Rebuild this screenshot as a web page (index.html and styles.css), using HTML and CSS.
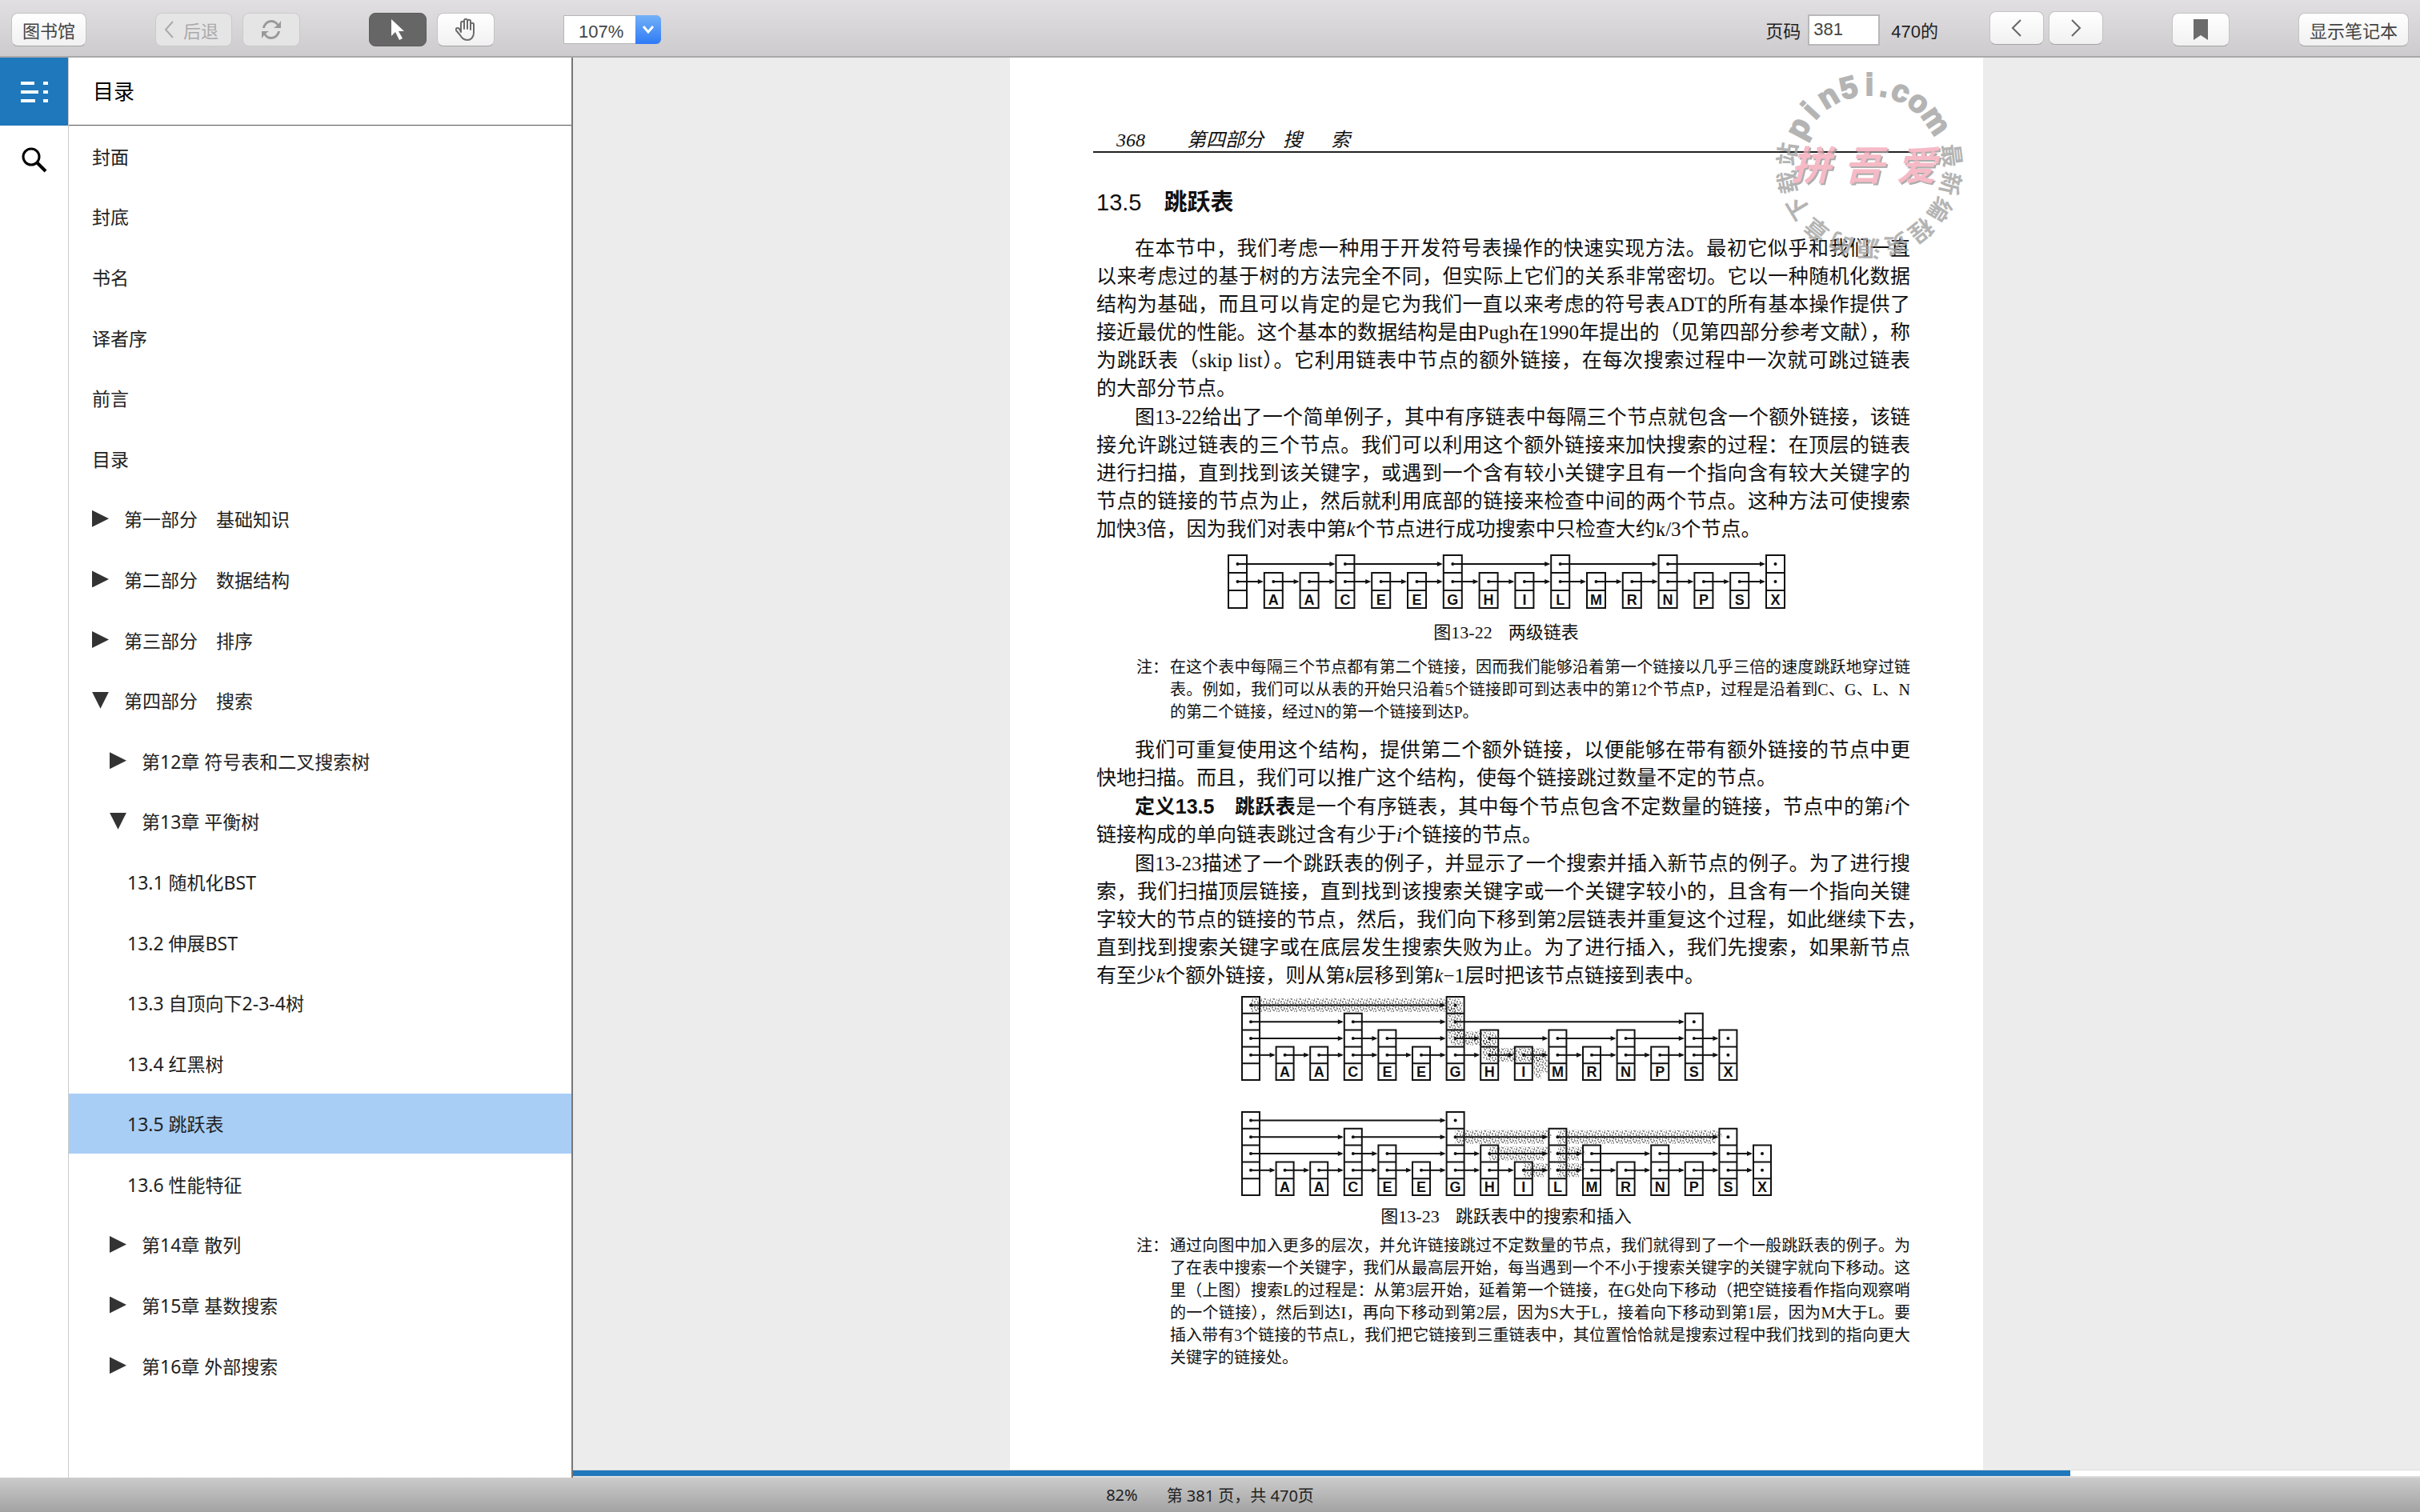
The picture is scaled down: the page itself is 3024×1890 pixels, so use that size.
FILE: index.html
```html
<!DOCTYPE html>
<html lang="zh-CN">
<head>
    <meta charset="UTF-8">
    <meta name="viewport" content="width=device-width, initial-scale=1.0">
    <title>13.5 跳跃表</title>
    <link rel="stylesheet" href="styles.css">
</head>
<body>

    <header class="toolbar">
        <button class="btn" type="button">图书馆</button>
        <div class="group">
            <button class="btn btnBack" type="button" disabled>
                <svg width="12" height="22" viewBox="0 0 12 22" fill="none" stroke="currentColor" stroke-width="2"><path d="M11 1L2 11l9 10"/></svg>
                后退
            </button>
            <button class="btn btnIcon" type="button" disabled aria-label="刷新">
                <svg width="28" height="28" viewBox="0 0 28 28"><path d="M3 12C4 6 9 2 14 2c4 0 7 2 9 5l3-4v9h-9l4-3C19 6 17 5 14 5c-4 0-7 3-8 7zM25 16c-1 6-6 10-11 10-4 0-7-2-9-5l-3 4v-9h9l-4 3c2 3 4 4 7 4 4 0 7-3 8-7z" fill="currentColor"/></svg>
            </button>
        </div>
        <div class="group">
            <button class="btn btnIcon btnOn" type="button" aria-label="选择">
                <svg width="18" height="28" viewBox="0 0 18 28"><path d="M1 1v21l5-5 5 10 4-2-5-9h7z" fill="currentColor"/></svg>
            </button>
            <button class="btn btnIcon" type="button" aria-label="拖动">
                <svg width="26" height="28" viewBox="0 0 26 28" fill="none" stroke="currentColor" stroke-width="2" stroke-linejoin="round" stroke-linecap="round"><path d="M7 17V6c0-3 4-3 4 0v7V3c0-3 4-3 4 0v10V4c0-3 4-3 4 0v10V8c0-3 4-3 4 0v10c0 6-4 9-8 9-5 0-7-3-9-6l-5-6c-1-3 2-4 4-2z"/></svg>
            </button>
        </div>
        <div class="zoomBox">
            <select class="zoom" aria-label="缩放">
                <option>107%</option>
            </select>
            <span class="zoomArrow">
                <svg width="16" height="12" viewBox="0 0 16 12" fill="none" stroke="#fff" stroke-width="3"><path d="M2 2l6 7 6-7"/></svg>
            </span>
        </div>
        <div class="pager">
            <label for="pageNo">页码</label>
            <input class="pageNo" id="pageNo" type="text" value="381">
            <span class="total">470的</span>
        </div>
        <div class="group turn">
            <button class="btn btnTurn" type="button" aria-label="上一页">
                <svg width="14" height="22" viewBox="0 0 14 22" fill="none" stroke="currentColor" stroke-width="2"><path d="M12 1L2 11l10 10"/></svg>
            </button>
            <button class="btn btnTurn" type="button" aria-label="下一页">
                <svg width="14" height="22" viewBox="0 0 14 22" fill="none" stroke="currentColor" stroke-width="2"><path d="M2 1l10 10L2 21"/></svg>
            </button>
        </div>
        <button class="btn btnIcon" type="button" aria-label="书签">
            <svg width="18" height="26" viewBox="0 0 18 26"><path d="M0 0h18v26l-9-6-9 6z" fill="currentColor"/></svg>
        </button>
        <button class="btn" type="button">显示笔记本</button>
    </header>

    <div class="main">
        <div class="rail">
            <button class="railBtn active" type="button" aria-label="目录">
                <svg width="34" height="26" viewBox="0 0 34 26" fill="#fff"><path d="M0 0h17v4H0zM28 0h6v4h-6zM0 11h22v4H0zM28 11h6v4h-6zM0 22h18v4H0zM28 22h6v4h-6z"/></svg>
            </button>
            <button class="railBtn" type="button" aria-label="搜索">
                <svg width="32" height="32" viewBox="0 0 32 32" fill="none" stroke="#000" stroke-width="3"><circle cx="12" cy="12" r="10"/><path d="M19 19l11 11" stroke-width="4"/></svg>
            </button>
        </div>

        <nav class="toc">
            <h2 class="tocTitle">目录</h2>
            <ul class="tocList">
                <li><a href="#">封面</a></li>
                <li><a href="#">封底</a></li>
                <li><a href="#">书名</a></li>
                <li><a href="#">译者序</a></li>
                <li><a href="#">前言</a></li>
                <li><a href="#">目录</a></li>
                <li><a href="#"><i class="arrow"></i>第一部分　基础知识</a></li>
                <li><a href="#"><i class="arrow"></i>第二部分　数据结构</a></li>
                <li><a href="#"><i class="arrow"></i>第三部分　排序</a></li>
                <li><a href="#"><i class="arrow open"></i>第四部分　搜索</a></li>
                <li><a href="#" class="lv2"><i class="arrow"></i>第12章 符号表和二叉搜索树</a></li>
                <li><a href="#" class="lv2"><i class="arrow open"></i>第13章 平衡树</a></li>
                <li><a href="#" class="lv3">13.1 随机化BST</a></li>
                <li><a href="#" class="lv3">13.2 伸展BST</a></li>
                <li><a href="#" class="lv3">13.3 自顶向下2-3-4树</a></li>
                <li><a href="#" class="lv3">13.4 红黑树</a></li>
                <li><a href="#" class="lv3 current">13.5 跳跃表</a></li>
                <li><a href="#" class="lv3">13.6 性能特征</a></li>
                <li><a href="#" class="lv2"><i class="arrow"></i>第14章 散列</a></li>
                <li><a href="#" class="lv2"><i class="arrow"></i>第15章 基数搜索</a></li>
                <li><a href="#" class="lv2"><i class="arrow"></i>第16章 外部搜索</a></li>
            </ul>
        </nav>

        <div class="viewer">
            <div class="scroll">
                <article class="page">
                    <div class="pageHead"><span>368</span><span>第四部分</span><span>搜</span><span>索</span></div>
                    <h1 class="section"><span class="num">13.5</span>跳跃表</h1>

                    <p class="text">
                        <span class="line indent">在本节中，我们考虑一种用于开发符号表操作的快速实现方法。最初它似乎和我们一直</span>
                        <span class="line">以来考虑过的基于树的方法完全不同，但实际上它们的关系非常密切。它以一种随机化数据</span>
                        <span class="line">结构为基础，而且可以肯定的是它为我们一直以来考虑的符号表ADT的所有基本操作提供了</span>
                        <span class="line">接近最优的性能。这个基本的数据结构是由Pugh在1990年提出的（见第四部分参考文献），称</span>
                        <span class="line">为跳跃表（skip list）。它利用链表中节点的额外链接，在每次搜索过程中一次就可跳过链表</span>
                        <span class="line last">的大部分节点。</span>
                    </p>
                    <p class="text">
                        <span class="line indent">图13-22给出了一个简单例子，其中有序链表中每隔三个节点就包含一个额外链接，该链</span>
                        <span class="line">接允许跳过链表的三个节点。我们可以利用这个额外链接来加快搜索的过程：在顶层的链表</span>
                        <span class="line">进行扫描，直到找到该关键字，或遇到一个含有较小关键字且有一个指向含有较大关键字的</span>
                        <span class="line">节点的链接的节点为止，然后就利用底部的链接来检查中间的两个节点。这种方法可使搜索</span>
                        <span class="line last">加快3倍，因为我们对表中第<em>k</em>个节点进行成功搜索中只检查大约k/3个节点。</span>
                    </p>

                    <figure class="figure">
                        <svg class="list" id="fig22"></svg>
                        <figcaption><span>图13-22</span><span>两级链表</span></figcaption>
                    </figure>
                    <div class="note">
                        <span>注：</span>
                        <p class="noteText">
                            <span class="line">在这个表中每隔三个节点都有第二个链接，因而我们能够沿着第一个链接以几乎三倍的速度跳跃地穿过链</span>
                            <span class="line">表。例如，我们可以从表的开始只沿着5个链接即可到达表中的第12个节点P，过程是沿着到C、G、L、N</span>
                            <span class="line last">的第二个链接，经过N的第一个链接到达P。</span>
                        </p>
                    </div>

                    <p class="text">
                        <span class="line indent">我们可重复使用这个结构，提供第二个额外链接，以便能够在带有额外链接的节点中更</span>
                        <span class="line last">快地扫描。而且，我们可以推广这个结构，使每个链接跳过数量不定的节点。</span>
                    </p>
                    <p class="text">
                        <span class="line indent"><b>定义13.5　跳跃表</b>是一个有序链表，其中每个节点包含不定数量的链接，节点中的第<em>i</em>个</span>
                        <span class="line last">链接构成的单向链表跳过含有少于<em>i</em>个链接的节点。</span>
                    </p>
                    <p class="text">
                        <span class="line indent">图13-23描述了一个跳跃表的例子，并显示了一个搜索并插入新节点的例子。为了进行搜</span>
                        <span class="line">索，我们扫描顶层链接，直到找到该搜索关键字或一个关键字较小的，且含有一个指向关键</span>
                        <span class="line">字较大的节点的链接的节点，然后，我们向下移到第2层链表并重复这个过程，如此继续下去，</span>
                        <span class="line">直到找到搜索关键字或在底层发生搜索失败为止。为了进行插入，我们先搜索，如果新节点</span>
                        <span class="line last">有至少<em>k</em>个额外链接，则从第<em>k</em>层移到第<em>k</em>−1层时把该节点链接到表中。</span>
                    </p>

                    <figure class="figure figPair">
                        <svg class="list" id="fig23a"></svg>
                        <svg class="list" id="fig23b"></svg>
                        <figcaption><span>图13-23</span><span>跳跃表中的搜索和插入</span></figcaption>
                    </figure>
                    <div class="note noteEnd">
                        <span>注：</span>
                        <p class="noteText">
                            <span class="line">通过向图中加入更多的层次，并允许链接跳过不定数量的节点，我们就得到了一个一般跳跃表的例子。为</span>
                            <span class="line">了在表中搜索一个关键字，我们从最高层开始，每当遇到一个不小于搜索关键字的关键字就向下移动。这</span>
                            <span class="line">里（上图）搜索L的过程是：从第3层开始，延着第一个链接，在G处向下移动（把空链接看作指向观察哨</span>
                            <span class="line">的一个链接），然后到达I，再向下移动到第2层，因为S大于L，接着向下移动到第1层，因为M大于L。要</span>
                            <span class="line">插入带有3个链接的节点L，我们把它链接到三重链表中，其位置恰恰就是搜索过程中我们找到的指向更大</span>
                            <span class="line last">关键字的链接处。</span>
                        </p>
                    </div>

                    <svg class="seal" id="seal" viewBox="-120 -120 240 240"></svg>
                </article>
            </div>
            <progress class="progress" value="381" max="470" aria-label="阅读进度"></progress>
        </div>
    </div>

    <footer class="status"><span>82%</span><span>第 381 页，共 470页</span></footer>

    <script>
        //画跳跃表: nodes 每项为 [关键字, 链接层数], marks 为灰色的搜索路径
        function drawList(id, nodes, o){
            var svg = document.getElementById(id);
            var max = 0;
            for(var i = 0;i < nodes.length;i++){
                max = Math.max(max, nodes[i][1]);
            }
            var w = 15 * o.step + o.w;//两幅图同宽，左边对齐
            var h = (max + 1) * o.h;
            var boxes = '', links = '', dots = '', keys = '', marks = '';
            function cx(i){ return i * o.step + o.w / 2; }
            function cy(level){ return h - level * o.h - o.h / 2; }
            for(i = 0;i < nodes.length;i++){
                var n = nodes[i][1];
                for(var l = 0;l <= n;l++){
                    boxes += 'M' + i * o.step + ' ' + (h - (l + 1) * o.h) + 'h' + o.w + 'v' + o.h + 'h-' + o.w + 'z';
                }
                keys += '<text x="' + cx(i) + '" y="' + (h - 4) + '">' + nodes[i][0] + '</text>';
                for(l = 1;l <= n;l++){
                    var y = cy(l);
                    dots += '<circle cx="' + cx(i) + '" cy="' + y + '" r="2"/>';
                    //找到下一个层数足够的节点
                    for(var j = i + 1;j < nodes.length;j++){
                        if(nodes[j][1] >= l){
                            var end = j * o.step;
                            links += '<path d="M' + cx(i) + ' ' + y + 'H' + (end - 3) + '"/>';
                            dots += '<path d="M' + (end - 1) + ' ' + y + 'l-7 -3v6z"/>';
                            break;
                        }
                    }
                }
            }
            (o.marks || []).forEach(function(m){
                //[起点, 起点层, 终点, 终点层]
                var x1 = cx(m[0]), x2 = cx(m[2]), y1 = cy(m[1]), y2 = cy(m[3]);
                marks += '<path d="M' + x1 + ' ' + y1 + 'L' + x2 + ' ' + y2 + 'h1v1"/>';
            });
            svg.setAttribute('viewBox', '-1 -1 ' + (w + 2) + ' ' + (h + 2));
            svg.style.width = w + 2 + 'px';
            svg.innerHTML =
                '<defs><pattern id="' + id + 'dots" width="11" height="7" patternUnits="userSpaceOnUse">' +
                '<path d="M0 1h2M4 0h1M8 1h2M2 3h1M6 3h2M10 4h1M1 5h2M4 6h2M8 6h1M5 2h1" stroke="#222" stroke-width="1"/></pattern></defs>' +
                '<g fill="none" stroke="url(#' + id + 'dots)" stroke-width="17" stroke-linejoin="round">' + marks + '</g>' +
                '<path d="' + boxes + '" fill="none" stroke="#111" stroke-width="2"/>' +
                '<g stroke="#111" stroke-width="2">' + links + '</g>' +
                '<g fill="#111">' + dots + '</g>' +
                '<g class="keys">' + keys + '</g>';
        }

        drawList('fig22', [
            ['', 2], ['A', 1], ['A', 1], ['C', 2], ['E', 1], ['E', 1], ['G', 2], ['H', 1],
            ['I', 1], ['L', 2], ['M', 1], ['R', 1], ['N', 2], ['P', 1], ['S', 1], ['X', 2]
        ], {w: 23, h: 22, step: 44.8});

        drawList('fig23a', [
            ['', 4], ['A', 1], ['A', 1], ['C', 3], ['E', 2], ['E', 1], ['G', 4], ['H', 2],
            ['I', 1], ['M', 2], ['R', 1], ['N', 2], ['P', 1], ['S', 3], ['X', 2]
        ], {w: 22, h: 20.8, step: 42.6, marks: [
            [0, 4, 6, 4], [6, 4, 6, 2], [6, 2, 7, 2], [7, 2, 7, 1], [7, 1, 8.5, 1], [8.5, 1, 8.5, 0]
        ]});

        drawList('fig23b', [
            ['', 4], ['A', 1], ['A', 1], ['C', 3], ['E', 2], ['E', 1], ['G', 4], ['H', 2],
            ['I', 1], ['L', 3], ['M', 2], ['R', 1], ['N', 2], ['P', 1], ['S', 3], ['X', 2]
        ], {w: 22, h: 20.8, step: 42.6, marks: [
            [6, 3, 8.6, 3], [9, 3, 13.6, 3], [7, 2, 8.6, 2], [9, 2, 9.6, 2], [8, 1, 8.6, 1], [9, 1, 9.6, 1]
        ]});

        //印章: 文字沿圆周排列
        var ring = [
            ['p', -62], ['i', -47], ['n', -31], ['5', -15], ['i', 0], ['.', 11], ['c', 23], ['o', 38], ['m', 56]
        ];
        '最新编程资源的章下载站'.split('').forEach(function(c, i){
            ring.push([c, 83 + i * 19.5]);
        });
        var html = '';
        ring.forEach(function(r, i){
            html += '<text class="' + (i < 9 ? 'en' : 'cn') + '" y="' + (i < 9 ? -88 : -93) + '" transform="rotate(' + r[1] + ')">' + r[0] + '</text>';
        });
        ['拼', '吾', '爱'].forEach(function(c, i){
            var x = (i - 1) * 66 - 7;
            html += '<text class="shade" x="' + (x + 2) + '" y="20">' + c + '</text><text class="red" x="' + x + '" y="18">' + c + '</text>';
        });
        document.getElementById('seal').innerHTML = html;
    </script>
</body>
</html>
```
FILE: styles.css
```css
*{
    padding: 0;
    margin: 0;
    list-style: none;
    box-sizing: border-box;
}
body{
    display: flex;
    flex-direction: column;
    height: 100vh;
    overflow: hidden;
    color: #222;
    font-family: "Liberation Sans", "Noto Sans CJK SC", sans-serif;
    font-size: 22px;
}
button, input, select{
    font: inherit;
    color: inherit;
}

/* 工具栏 */
.toolbar{
    flex: none;
    display: flex;
    align-items: center;
    gap: 86px;
    height: 72px;
    padding: 4px 14px 0;
    background: linear-gradient(#e1dfe2, #cdcbcd);
    border-bottom: 2px solid #a9a8a9;
}
.toolbar .group{
    display: flex;
    gap: 13px;
}
.btn{
    display: flex;
    align-items: center;
    justify-content: center;
    height: 42px;
    padding: 0 13px;
    color: #444;
    background: linear-gradient(#fff, #f1f1f1);
    border: 1px solid #c4c3c4;
    border-bottom-color: #a5a5a5;
    border-radius: 8px;
    white-space: nowrap;
}
.btn:disabled{
    color: #aaa;
    background: #e6e5e6;
    border-color: #cbcacb;
}
.btnBack{
    gap: 12px;
    padding: 0 16px 0 10px;
}
.btnIcon{
    width: 72px;
    color: #6b6b6b;
}
.btnIcon:disabled{
    color: #999;
}
.btnOn{
    color: #fff;
    background: #666;
    border-color: #5c5c5c;
}
.zoomBox{
    position: relative;
    width: 122px;
    height: 36px;
}
.zoom{
    width: 100%;
    height: 100%;
    padding: 4px 0 0 18px;
    appearance: none;
    color: #444;
    background: #fff;
    border: 1px solid #b5b5b5;
    border-radius: 0 6px 6px 0;
}
.zoomArrow{
    position: absolute;
    top: 0;
    right: 0;
    display: flex;
    align-items: center;
    justify-content: center;
    width: 32px;
    height: 36px;
    background: linear-gradient(#73b1f8, #2f7bf6);
    border-radius: 0 6px 6px 0;
    pointer-events: none;
}
.pager{
    display: flex;
    align-items: center;
    gap: 9px;
    margin-left: auto;
}
.pageNo{
    width: 90px;
    height: 39px;
    padding-left: 5px;
    color: #444;
    background: #fff;
    border: 2px solid #b9b8b9;
}
.total{
    padding: 0 2px 0 5px;
}
.toolbar .turn{
    gap: 6px;
    margin: 0 0 4px -24px;
}
.btnTurn{
    width: 68px;
    color: #666;
}

/* 左侧 */
.main{
    flex: 1;
    display: flex;
    min-height: 0;
}
.rail{
    width: 86px;
    background: #fff;
    border-right: 1px solid #ccc;
}
.railBtn{
    display: flex;
    align-items: center;
    justify-content: center;
    width: 100%;
    height: 85px;
    background: none;
    border: 0;
}
.railBtn.active{
    background: #1f78bb;
}
.toc{
    width: 630px;
    color: #222;
    background: #fff;
    border-right: 2px solid #777;
    font-family: "Noto Sans", "Noto Sans CJK SC", sans-serif;
    font-size: 23px;
}
.tocTitle{
    height: 85px;
    padding-left: 30px;
    line-height: 84px;
    color: #000;
    font-size: 26px;
    font-weight: normal;
    border-bottom: 1px solid #555;
}
.tocList a{
    display: flex;
    align-items: center;
    height: 4vh;
    padding-left: 29px;
    color: inherit;
    text-decoration: none;
}
.tocList .lv2{
    padding-left: 51px;
}
.tocList .lv3{
    padding-left: 73px;
}
.tocList .current{
    background: #a8cef6;
}
.arrow{
    width: 21px;
    height: 21px;
    margin-right: 19px;
    background: #333;
    clip-path: polygon(0 0, 100% 50%, 0 100%);
}
.arrow.open{
    clip-path: polygon(0 0, 100% 0, 50% 100%);
}

/* 阅读区 */
.viewer{
    flex: 1;
    display: flex;
    flex-direction: column;
    min-width: 0;
    background: #ececec;
}
.scroll{
    flex: 1;
    display: flex;
    justify-content: center;
    min-height: 0;
    overflow: hidden;
}
.page{
    position: relative;
    width: 100%;
    max-width: 1216px;
    padding: 88px 91px 0 108px;
    color: #111;
    background: #fff;
    font-family: "Liberation Serif", "Noto Sans CJK SC", serif;
    font-size: 25px;
    line-height: 35px;
}
.pageHead{
    display: flex;
    gap: 24px;
    height: 31px;
    margin-left: -4px;
    padding-left: 29px;
    line-height: 30px;
    font-size: 24px;
    font-style: italic;
    border-bottom: 2px solid #222;
}
.pageHead span:first-child{
    margin-right: 28px;
}
.pageHead span:last-child{
    margin-left: 12px;
}
.section{
    display: flex;
    gap: 28px;
    margin: 44px 0 22px;
    line-height: 36px;
    font-family: "Liberation Sans", "Noto Sans CJK SC", sans-serif;
    font-size: 29px;
}
.section .num{
    font-weight: normal;
}
.line{
    display: block;
    text-align: justify;
    text-align-last: justify;
    white-space: nowrap;
}
.line.last{
    text-align-last: left;
}
.line.indent{
    padding-left: 48px;
}
.text{
    margin-bottom: 1px;
}
.text b{
    font-family: "Liberation Sans", "Noto Sans CJK SC", sans-serif;
}
.figure{
    display: flex;
    flex-direction: column;
    align-items: center;
    gap: 12px;
    margin-top: 14px;
    padding-left: 7px;
}
.figPair{
    gap: 38px;
    margin-top: 8px;
}
.figPair figcaption{
    margin-top: -30px;
}
.list{
    display: block;
}
.keys{
    fill: #111;
    font: bold 18px "Liberation Sans", sans-serif;
    text-anchor: middle;
}
.figure figcaption{
    display: flex;
    gap: 20px;
    font-size: 22px;
}
.note{
    display: flex;
    gap: 2px;
    margin: 12px 0 16px;
    padding-left: 50px;
    font-size: 20px;
    line-height: 28px;
}
.note.noteEnd{
    margin-top: 5px;
}
.noteText{
    flex: 1;
    min-width: 0;
}

/* 印章 */
.seal{
    position: absolute;
    top: 15px;
    right: 22px;
    width: 240px;
    height: 240px;
    overflow: visible;
    opacity: 0.8;
    text-anchor: middle;
}
.seal .en{
    fill: #a2a2a2;
    stroke: #a2a2a2;
    stroke-width: 2px;
    font: bold 38px "Liberation Sans", sans-serif;
}
.seal .cn{
    fill: #a2a2a2;
    font: bold 29px "Noto Sans CJK SC", sans-serif;
}
.seal .shade{
    fill: #999;
    font: italic bold 50px "Noto Sans CJK SC", sans-serif;
}
.seal .red{
    fill: #f5a9b8;
    font: italic bold 50px "Noto Sans CJK SC", sans-serif;
}

.progress{
    display: block;
    flex: none;
    width: 100%;
    height: 10px;
    appearance: none;
    background: #fff;
    border: 0;
    border-top: 1px solid #ddd;
    border-bottom: 2px solid #ddd;
}
.progress::-webkit-progress-bar{
    background: #fff;
}
.progress::-webkit-progress-value{
    background: #1f78bb;
}
.status{
    flex: none;
    display: flex;
    align-items: center;
    justify-content: center;
    gap: 36px;
    height: 43px;
    background: linear-gradient(#cbcbcb, #a3a3a3);
    font-family: "Noto Sans", "Noto Sans CJK SC", sans-serif;
    font-size: 20px;
}
```
